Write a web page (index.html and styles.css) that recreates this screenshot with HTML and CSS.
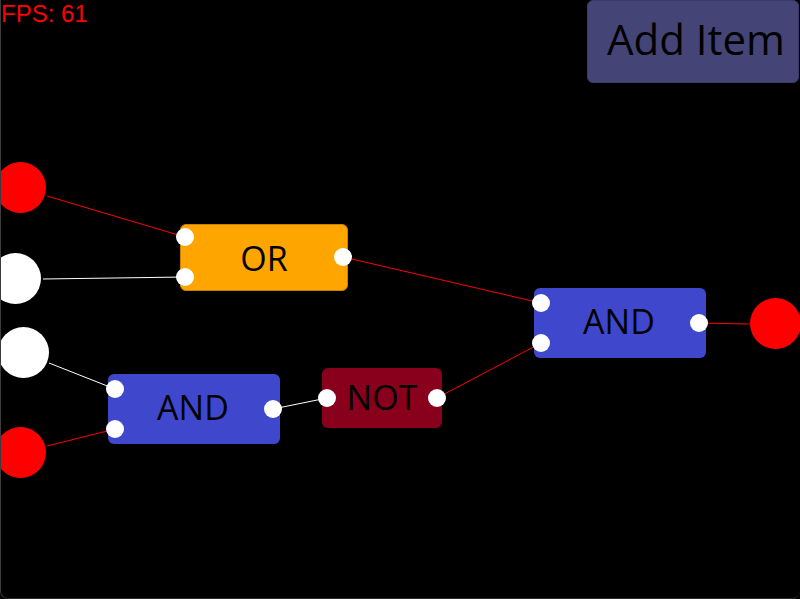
FILE: index.html
```
<!DOCTYPE html>
<html lang="en">
<head>
<meta charset="utf-8">
<title>Logic gates</title>
<link rel="stylesheet" href="styles.css">
</head>
<body>
<main class="board">
  <header class="toolbar">
    <span class="fps">FPS: 61</span>
    <button class="add" type="button">Add Item</button>
  </header>

  <svg class="wires" aria-hidden="true">
    <g class="on">
      <line x1="47" y1="196" x2="185" y2="237"/>
      <line x1="47" y1="446" x2="115" y2="429"/>
      <line x1="343" y1="257" x2="541" y2="303"/>
      <line x1="437" y1="398" x2="541" y2="343"/>
      <line x1="699" y1="323" x2="749" y2="324"/>
    </g>
    <g class="off">
      <line x1="43" y1="279" x2="185" y2="277"/>
      <line x1="49" y1="363" x2="115" y2="389"/>
      <line x1="273" y1="409" x2="327" y2="398"/>
    </g>
  </svg>

  <button class="lamp lit source-a" type="button" aria-label="Input A"></button>
  <button class="lamp source-b" type="button" aria-label="Input B"></button>
  <button class="lamp source-c" type="button" aria-label="Input C"></button>
  <button class="lamp lit source-d" type="button" aria-label="Input D"></button>
  <div class="lamp lit output"></div>

  <div class="gate or">OR<i class="port in-1"></i><i class="port in-2"></i><i class="port out"></i></div>
  <div class="gate and first">AND<i class="port in-1"></i><i class="port in-2"></i><i class="port out"></i></div>
  <div class="gate not">NOT<i class="port in-1"></i><i class="port out"></i></div>
  <div class="gate and second">AND<i class="port in-1"></i><i class="port in-2"></i><i class="port out"></i></div>
</main>
</body>
</html>
```
FILE: styles.css
```
* {
  box-sizing: border-box;
}

body {
  margin: 0;
  background: #000;
}

.board {
  position: relative;
  min-height: 100vh;
  overflow: hidden;
  border-left: 1px solid #3c3c3c;
  border-bottom: 1px solid #2b2829;
  border-radius: 0 0 8px 8px;
  background: #000;
}

.toolbar {
  display: flex;
  justify-content: space-between;
  align-items: flex-start;
  padding-right: 1px;
}

.fps {
  color: #f00;
  font: 24px/28px "Liberation Sans", Arial, sans-serif;
}

.add {
  padding: 9px 13px 15px 19px;
  border: 1px solid #3b3b68;
  border-radius: 6px;
  background: #444477;
  color: #000;
  font: 42px/57px "Open Sans", "Noto Sans", sans-serif;
}

.wires {
  position: absolute;
  top: 0;
  left: -1px;
  width: 100%;
  height: 100%;
  stroke-width: 1;
}

.on {
  stroke: #f00;
}

.off {
  stroke: #fff;
}

.lamp {
  position: absolute;
  width: 51px;
  height: 51px;
  padding: 0;
  border: 0;
  border-radius: 50%;
  background: #fff;
}

.lit {
  background: #f00;
}

.source-a {
  left: -6px;
  top: 162px;
}

.source-b {
  left: -11px;
  top: 253px;
}

.source-c {
  left: -3px;
  top: 327px;
}

.source-d {
  left: -6px;
  top: 427px;
}

.output {
  left: 749px;
  top: 298px;
}

.gate {
  position: absolute;
  display: flex;
  justify-content: center;
  align-items: center;
  border-radius: 6px;
  color: #000;
  font: 34px/46px "Open Sans", "Noto Sans", sans-serif;
}

.or {
  left: 179px;
  top: 224px;
  width: 168px;
  height: 67px;
  border: 1px solid #c98200;
  background: #ffa500;
}

.and {
  width: 172px;
  height: 70px;
  padding: 0 2px 4px 0;
  background: #3f48cc;
}

.first {
  left: 107px;
  top: 374px;
}

.second {
  left: 533px;
  top: 288px;
}

.not {
  left: 321px;
  top: 368px;
  width: 120px;
  height: 60px;
  padding: 0 0 2px;
  background: #88001b;
}

.port {
  position: absolute;
  width: 18px;
  height: 18px;
  border-radius: 50%;
  background: #fff;
}

.or .in-1 {
  left: -5px;
  top: 3px;
}

.or .in-2 {
  left: -5px;
  top: 43px;
}

.or .out {
  right: -5px;
  top: 23px;
}

.and .in-1 {
  left: -2px;
  top: 6px;
}

.and .in-2 {
  left: -2px;
  top: 46px;
}

.and .out {
  right: -2px;
  top: 26px;
}

.not .in-1 {
  left: -4px;
  top: 21px;
}

.not .out {
  right: -4px;
  top: 21px;
}
```
